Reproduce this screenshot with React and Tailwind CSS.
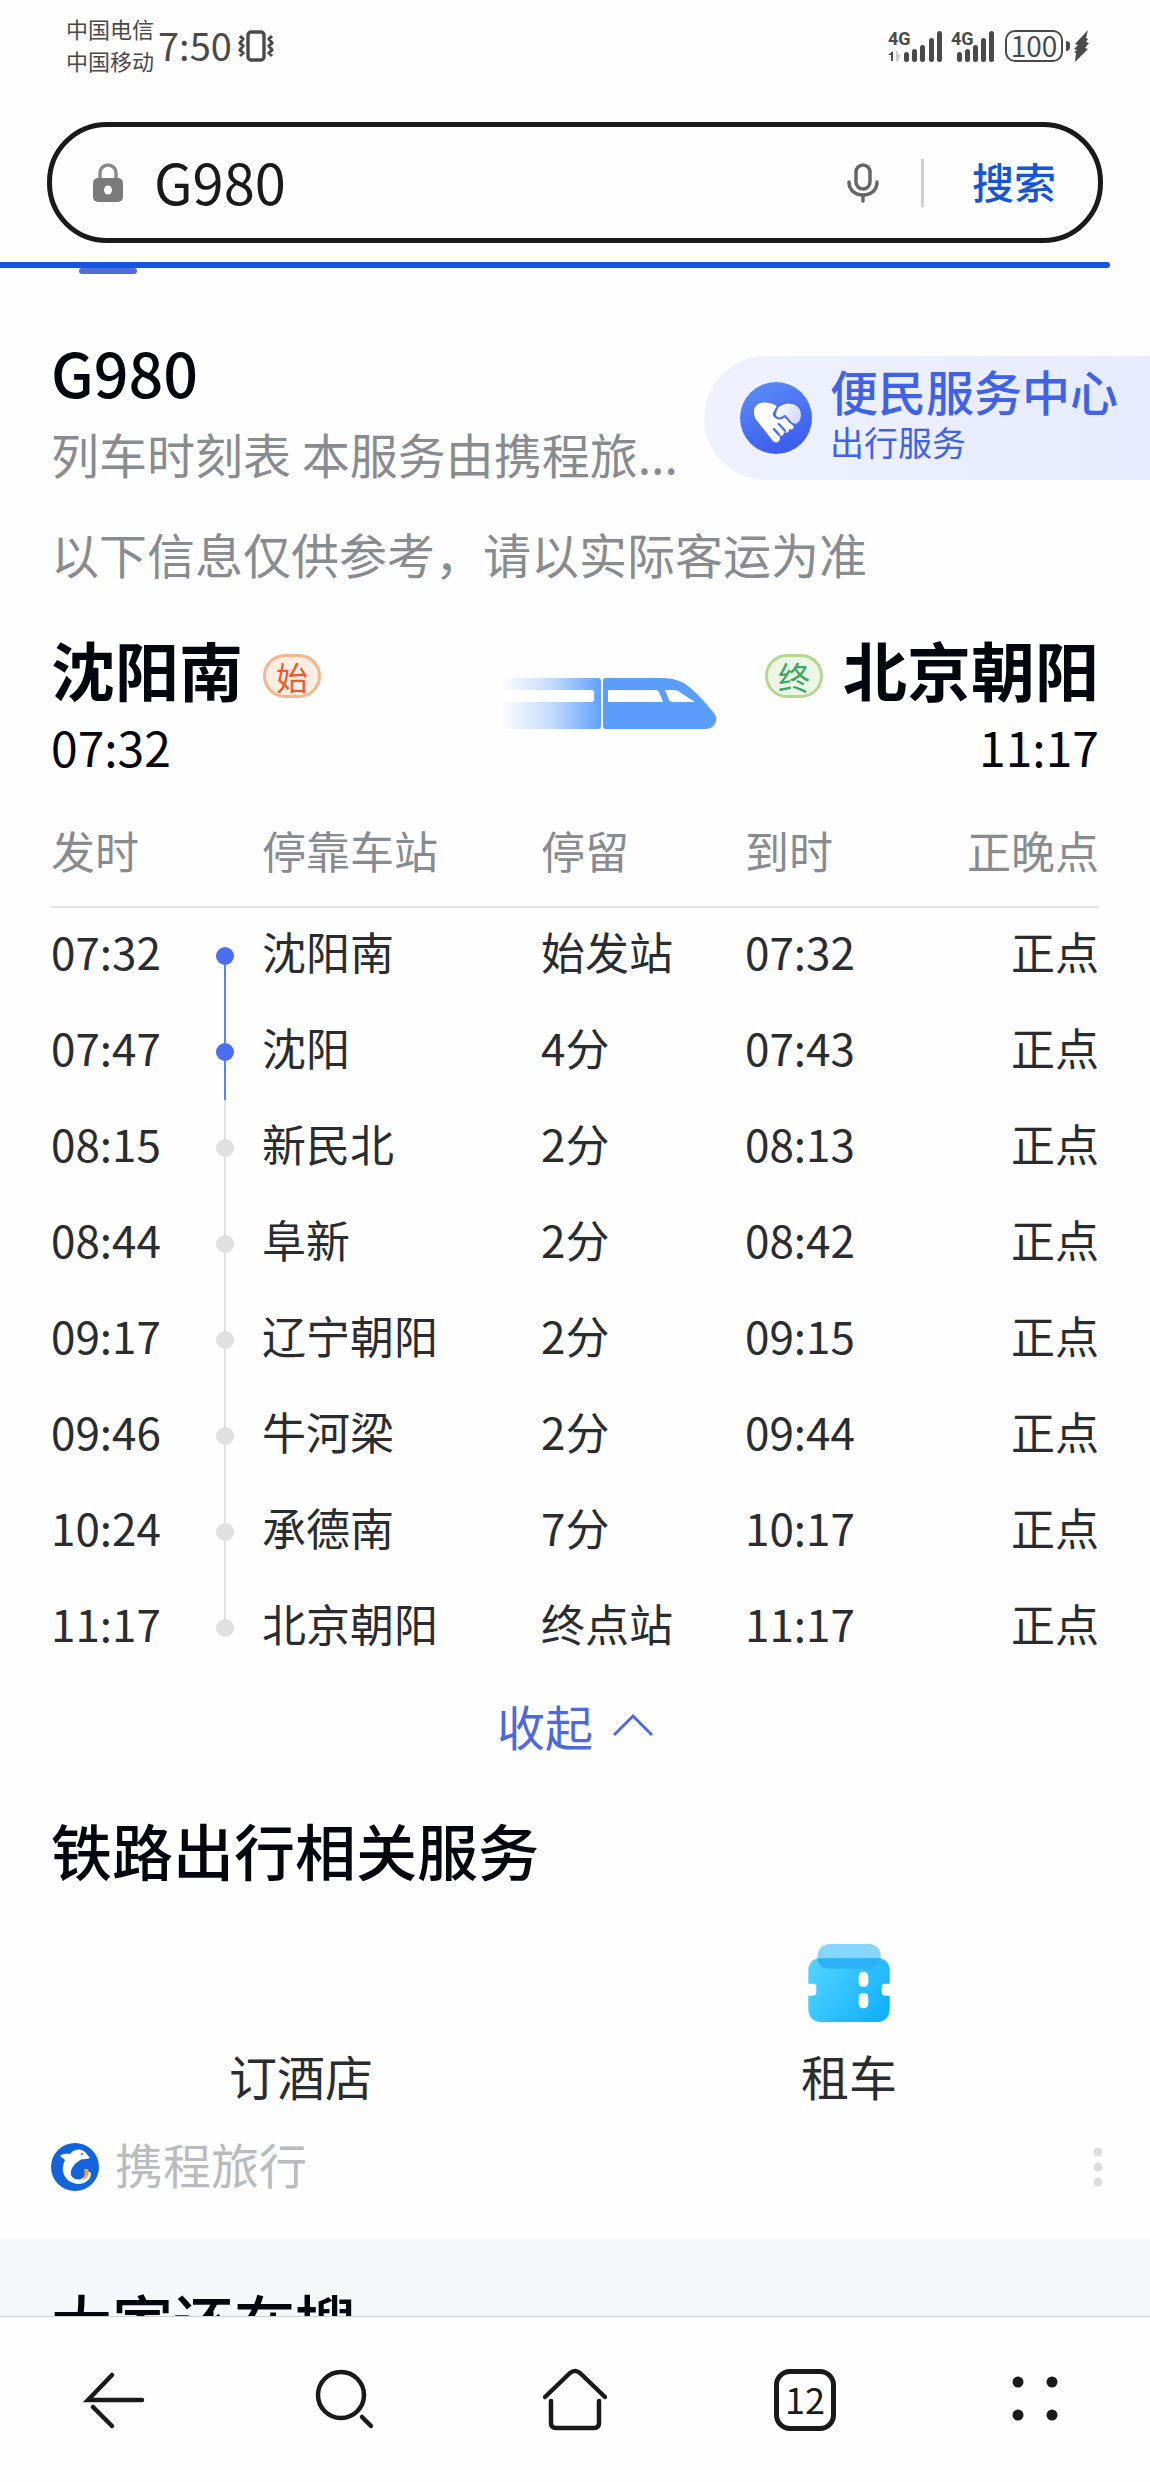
import React from 'react';

const stops = [
  { depart: '07:32', station: '沈阳南', stay: '始发站', arrive: '07:32', status: '正点', passed: true },
  { depart: '07:47', station: '沈阳', stay: '4分', arrive: '07:43', status: '正点', passed: true },
  { depart: '08:15', station: '新民北', stay: '2分', arrive: '08:13', status: '正点', passed: false },
  { depart: '08:44', station: '阜新', stay: '2分', arrive: '08:42', status: '正点', passed: false },
  { depart: '09:17', station: '辽宁朝阳', stay: '2分', arrive: '09:15', status: '正点', passed: false },
  { depart: '09:46', station: '牛河梁', stay: '2分', arrive: '09:44', status: '正点', passed: false },
  { depart: '10:24', station: '承德南', stay: '7分', arrive: '10:17', status: '正点', passed: false },
  { depart: '11:17', station: '北京朝阳', stay: '终点站', arrive: '11:17', status: '正点', passed: false },
];

function VibrateIcon() {
  return (
    <svg className="w-9 h-8" viewBox="0 0 36 32" fill="none" stroke="#4a4a4a">
      <rect x="10" y="2" width="16" height="28" rx="3" strokeWidth="3.4" />
      <path d="M2 6l3 3-3 4 3 3-3 4 3 3-3 3M34 6l-3 3 3 4-3 3 3 4-3 3 3 3" strokeWidth="3" />
    </svg>
  );
}

function SignalOne() {
  return (
    <svg className="w-[55px] h-8 overflow-visible" viewBox="0 0 55 32" fill="#4a4a4a">
      <text x="0" y="15" fontSize="18" fontWeight="700" fontFamily="Roboto, sans-serif">4G</text>
      <path d="M5 21v10H3v-6H0z" />
      <path d="M8 21h2v4l3-1-3 7H8z" fill="#c9c9c9" />
      <rect x="16" y="22" width="5" height="10" rx="2.5" />
      <rect x="24" y="19" width="5" height="13" rx="2.5" />
      <rect x="32" y="15" width="5" height="17" rx="2.5" />
      <rect x="41" y="8" width="5" height="24" rx="2.5" />
      <rect x="49" y="1" width="5" height="31" rx="2.5" />
    </svg>
  );
}

function SignalTwo() {
  return (
    <svg className="w-11 h-8 overflow-visible" viewBox="0 0 44 32" fill="#4a4a4a">
      <text x="0" y="15" fontSize="18" fontWeight="700" fontFamily="Roboto, sans-serif">4G</text>
      <rect x="6" y="22" width="5" height="10" rx="2.5" />
      <rect x="14" y="19" width="5" height="13" rx="2.5" />
      <rect x="22" y="15" width="5" height="17" rx="2.5" />
      <rect x="30" y="8" width="5" height="24" rx="2.5" />
      <rect x="38" y="1" width="5" height="31" rx="2.5" />
    </svg>
  );
}

function StatusBar() {
  return (
    <div className="flex items-center justify-between h-[92px] pl-[66px] pr-[61px] text-[#4a4a4a]">
      <div className="flex items-center">
        <div className="pb-1 text-[22px] leading-8">
          <div>中国电信</div>
          <div>中国移动</div>
        </div>
        <span className="ml-1 mr-[6px] pb-[2px] text-[38px] leading-10">7:50</span>
        <VibrateIcon />
      </div>
      <div className="flex items-center">
        <SignalOne />
        <span className="w-2" />
        <SignalTwo />
        <span className="flex items-center justify-center ml-[10px] w-[58px] h-8 pb-[2px] rounded-[10px] border-2 border-[#4a4a4a] text-[28px] leading-6">
          100
        </span>
        <span className="ml-[3px] w-1 h-[10px] rounded-r bg-[#4a4a4a]" />
        <svg className="ml-1 w-[15px] h-8" viewBox="0 0 15 32" fill="#4a4a4a">
          <path d="M14 0L1 14l3 1-4 4 3 1-3 2 2 1-1 9L14 19l-3-1 4-5-3-1 2-3-2-1z" />
        </svg>
      </div>
    </div>
  );
}

function SearchBar() {
  return (
    <form
      className="flex items-center mt-[30px] mx-[47px] h-[121px] pl-10 pr-[42px] rounded-[60px] border-[5px] border-[#1a1a1a]"
      onSubmit={(e) => e.preventDefault()}
    >
      <svg className="w-8 h-10 shrink-0" viewBox="0 0 32 40">
        <path d="M8 17V10a8 8 0 0 1 16 0v7" fill="none" stroke="#8a8a8a" strokeWidth="3.5" />
        <rect x="1" y="15" width="30" height="24" rx="5" fill="#7a7a7a" />
        <ellipse cx="16" cy="27" rx="4" ry="4.5" fill="#fff" />
      </svg>
      <input
        aria-label="搜索内容"
        defaultValue="G980"
        className="ml-[30px] flex-1 min-w-0 h-20 pb-1 text-[56px] text-[#1a1a1a] outline-none"
      />
      <button type="button" aria-label="语音搜索" className="shrink-0">
        <svg className="w-8 h-10" viewBox="0 0 32 40" fill="none" stroke="#666" strokeWidth="3.5" strokeLinecap="round">
          <rect x="9" y="2" width="14" height="24" rx="7" />
          <path d="M2 19c0 8 6 13 14 13s14-5 14-13M16 32v6" />
        </svg>
      </button>
      <span className="ml-[42px] w-[3px] h-12 bg-[#d0d0d0]" />
      <button type="submit" className="ml-12 pb-1 text-[42px] leading-[56px] font-medium text-[#1456d8]">
        搜索
      </button>
    </form>
  );
}

function HandshakeIcon() {
  return (
    <svg className="w-[72px] h-[72px] shrink-0" viewBox="0 0 214 214">
      <defs>
        <linearGradient id="hands-bg" x1="0.2" y1="0" x2="0.6" y2="1">
          <stop offset="0" stopColor="#5c8cf5" />
          <stop offset="1" stopColor="#3a5cf0" />
        </linearGradient>
        <linearGradient id="hands-right" x1="0" y1="0" x2="1" y2="0.4">
          <stop offset="0" stopColor="#fff" />
          <stop offset="1" stopColor="#d3ddfc" />
        </linearGradient>
      </defs>
      <circle cx="107" cy="107" r="107" fill="url(#hands-bg)" />
      <path
        d="M48 112C32 84 46 61 72 61c16 0 28 4 38 12l-6 10c-10 8-8 22 4 24 8 2 16-1 22-7l28 30c4 8-4 14-12 9 2 10-8 16-16 9 2 10-8 16-14 8 2 8 4 14 0 19-6 6-12 6-18 0z"
        fill="#fff"
      />
      <path
        d="M112 74c16-16 44-18 60-4 16 14 16 42 0 54-6 4-16 2-22-4l-17-19c-10 10-26 10-29-2-1-10 4-20 8-25z"
        fill="url(#hands-right)"
        stroke="#4a6ff2"
        strokeWidth="6"
        strokeLinejoin="round"
      />
      <path d="M101 140l15 17M115 125l19 20" stroke="#4a6ff2" strokeWidth="7" strokeLinecap="round" />
    </svg>
  );
}

function TrainIcon() {
  return (
    <svg className="mt-[46px] w-[217px] h-[51px] shrink-0" viewBox="0 0 217 51">
      <defs>
        <linearGradient id="tail" x1="0" y1="0" x2="1" y2="0">
          <stop offset="0" stopColor="#5a9dfb" stopOpacity="0" />
          <stop offset="0.5" stopColor="#5a9dfb" stopOpacity="0.35" />
          <stop offset="1" stopColor="#5a9dfb" stopOpacity="0.95" />
        </linearGradient>
      </defs>
      <path d="M0 0h98q3 0 3 3v45q0 3-3 3H0z" fill="url(#tail)" />
      <path d="M0 12h92q2 0 2 2v8q0 2-2 2H0z" fill="#fff" />
      <path d="M106 0h55c18 0 26 6 36 16 8 8 12 13 17 19 6 8-1 16-8 16H106q-3 0-3-3V3q0-3 3-3z" fill="#5a9dfb" />
      <path d="M108 12h48q2 0 3 2l4 10h-55z" fill="#fff" />
      <path d="M165 12h9q4 0 7 3l14 9h-22q-3 0-4-2z" fill="#fff" />
    </svg>
  );
}

function CtripLogo() {
  return (
    <svg className="w-12 h-12" viewBox="0 0 48 48">
      <circle cx="24" cy="24" r="24" fill="#1263dc" />
      <path
        d="M9 13c4-3 8-2 10-2 5-6 12-5 15-2l5 6c-4 2-8 0-11 3-5 3-9 8-8 14 3 6 11 6 14 0l1-5 5 3c0 9-10 13-18 10C13 37 9 27 14 17z"
        fill="#fff"
      />
      <path d="M33 26h4c2 5 0 9-6 11 3-3 3-7 2-11z" fill="#f5a040" />
      <circle cx="31" cy="11" r="1" fill="#1263dc" />
    </svg>
  );
}

function TicketIcon() {
  return (
    <svg className="w-[82px] h-[78px]" viewBox="0 0 244 234">
      <defs>
        <linearGradient id="ticket" x1="0" y1="0.2" x2="1" y2="0.8">
          <stop offset="0" stopColor="#50d2ff" />
          <stop offset="1" stopColor="#10b0ff" />
        </linearGradient>
      </defs>
      <path d="M64 0h118c20 0 35 15 35 35v12H28V35C28 15 44 0 64 0z" fill="#86d6ff" />
      <path
        d="M34 43h176c20 0 34 16 34 36v40h-14q-10 0-10 10v16q0 10 10 10h14v40c0 24-16 39-36 39H38c-22 0-38-15-38-39v-40h14q10 0 10-10v-16q0-10-10-10H0V79c0-20 14-36 34-36z"
        fill="url(#ticket)"
      />
      <path d="M28 43h189c0 18-14 31-32 31H60c-18 0-32-13-32-31z" fill="#2cb2f8" />
      <rect x="151" y="83" width="29" height="46" rx="14" fill="#fff" />
      <rect x="151" y="147" width="29" height="46" rx="14" fill="#fff" />
    </svg>
  );
}

function Timetable() {
  return (
    <table className="mt-10 w-full table-fixed text-left text-[44px] text-[#2a2c30]">
      <thead>
        <tr className="border-b-2 border-[#e3e3e5] text-[#888b90]">
          <th className="w-[165px] pb-6 font-normal leading-[64px]">发时</th>
          <th className="w-[46px]" aria-label="进度" />
          <th className="w-[279px] pb-6 font-normal leading-[64px]">停靠车站</th>
          <th className="w-[204px] pb-6 font-normal leading-[64px]">停留</th>
          <th className="w-[170px] pb-6 font-normal leading-[64px]">到时</th>
          <th className="pb-6 font-normal leading-[64px] text-right">正晚点</th>
        </tr>
      </thead>
      <tbody>
        {stops.map((stop, i) => (
          <tr key={stop.station} className="h-24 leading-[64px]">
            <td className="pb-[10px]">{stop.depart}</td>
            <td className="h-24">
              <div className="flex flex-col items-center w-[18px] h-24">
                <span className={`w-[2px] flex-1 ${i === 0 ? 'bg-transparent' : stop.passed ? 'bg-[#5b82f0]' : 'bg-[#e2e2e2]'}`} />
                <span className={`w-[18px] h-[18px] rounded-full ${stop.passed ? 'bg-[#4a6ef5]' : 'bg-[#e0e0e0]'}`} />
                <span
                  className={`w-[2px] flex-1 ${
                    i === stops.length - 1 ? 'bg-transparent' : stop.passed ? 'bg-[#5b82f0]' : 'bg-[#e2e2e2]'
                  }`}
                />
              </div>
            </td>
            <td className="pb-[10px]">{stop.station}</td>
            <td className="pb-[10px]">{stop.stay}</td>
            <td className="pb-[10px]">{stop.arrive}</td>
            <td className="pb-[10px] text-right">{stop.status}</td>
          </tr>
        ))}
      </tbody>
    </table>
  );
}

function BottomNav() {
  return (
    <nav className="shrink-0 flex items-center h-[166px] border-t border-[#cdd0d3] bg-[#fefefe]">
      <button aria-label="返回" className="flex-1 flex justify-center">
        <svg className="w-16 h-16" viewBox="0 0 64 64" fill="none" stroke="#1a1a1a" strokeWidth="4.5" strokeLinecap="round">
          <path d="M59 32H5L29 7M10 39l19 19" />
        </svg>
      </button>
      <button aria-label="搜索" className="flex-1 flex justify-center">
        <svg className="w-16 h-16" viewBox="0 0 64 64" fill="none" stroke="#1a1a1a" strokeWidth="4.5" strokeLinecap="round">
          <circle cx="28" cy="27" r="23" />
          <path d="M49 49l9 9" />
        </svg>
      </button>
      <button aria-label="主页" className="flex-1 flex justify-center">
        <svg
          className="w-16 h-16"
          viewBox="0 0 64 64"
          fill="none"
          stroke="#1a1a1a"
          strokeWidth="4.5"
          strokeLinecap="round"
          strokeLinejoin="round"
        >
          <path d="M2 29L27 5q5-4 10 0l25 24" />
          <path d="M8 33v22q0 5 5 5h38q5 0 5-5V33" />
        </svg>
      </button>
      <button aria-label="标签页" className="flex-1 flex justify-center">
        <span className="flex items-center justify-center w-[62px] h-[62px] pb-1 rounded-[16px] border-[5px] border-[#1a1a1a] text-[36px] leading-10 text-[#1a1a1a]">
          12
        </span>
      </button>
      <button aria-label="菜单" className="flex-1 flex justify-center">
        <svg className="w-16 h-16" viewBox="0 0 64 64" fill="#1a1a1a">
          <circle cx="15" cy="14" r="5.5" />
          <circle cx="49" cy="14" r="5.5" />
          <circle cx="15" cy="47" r="5.5" />
          <circle cx="49" cy="47" r="5.5" />
        </svg>
      </button>
    </nav>
  );
}

export default function App() {
  return (
    <div
      lang="zh-CN"
      className="flex flex-col h-screen overflow-hidden bg-[#fefefe] font-['Noto_Sans_CJK_SC','Noto_Sans',sans-serif]"
    >
      <header className="shrink-0">
        <StatusBar />
        <SearchBar />
        {/* Page load progress */}
        <div className="mt-[19px] mr-10 h-[6px] rounded-r-full bg-[#1456e0]" />
      </header>

      <main className="flex-1 min-h-0 overflow-hidden">
        {/* Active tab marker */}
        <div className="ml-[79px] w-[58px] h-[6px] rounded-full bg-[#506cd8]" />

        {/* Title and service badge */}
        <div className="flex items-start justify-between mt-[62px] pl-[51px]">
          <div className="whitespace-nowrap">
            <h1 className="text-[61px] leading-[72px] font-medium text-[#05060f]">G980</h1>
            <p className="mt-[13px] text-[48px] leading-[64px] text-[#888b90]">列车时刻表 本服务由携程旅...</p>
          </div>
          <a
            href="#service"
            className="flex items-center mt-5 w-[446px] h-[124px] pl-9 rounded-l-full bg-linear-to-r from-[#eff2fd] to-[#e6ebff] text-[#3f62e6]"
          >
            <HandshakeIcon />
            <span className="ml-[18px] pb-2 whitespace-nowrap">
              <span className="block text-[48px] leading-[56px] font-medium">便民服务中心</span>
              <span className="block text-[34px] leading-[48px]">出行服务</span>
            </span>
          </a>
        </div>

        <div className="px-[51px]">
          <p className="mt-9 text-[48px] leading-[64px] text-[#888b90]">以下信息仅供参考，请以实际客运为准</p>

          {/* Route */}
          <section className="flex items-start mt-[47px] text-[#05060f]">
            <div>
              <div className="flex items-center">
                <h2 className="text-[64px] leading-[72px] font-bold">沈阳南</h2>
                <span className="flex items-center justify-center mt-4 ml-5 w-[58px] h-11 rounded-full border-[3px] border-[#f5b68c] bg-[#fdeee4] text-[32px] leading-8 text-[#ee5a2c]">
                  始
                </span>
              </div>
              <p className="mt-[10px] text-[48px] leading-[64px]">07:32</p>
            </div>
            <span className="flex-1" />
            <TrainIcon />
            <div className="ml-12">
              <div className="flex items-center">
                <span className="flex items-center justify-center mt-4 mr-5 w-[58px] h-11 rounded-full border-[3px] border-[#b2d890] bg-[#edf6e4] text-[32px] leading-8 text-[#38a868]">
                  终
                </span>
                <h2 className="text-[64px] leading-[72px] font-bold">北京朝阳</h2>
              </div>
              <p className="mt-[10px] text-right text-[48px] leading-[64px]">11:17</p>
            </div>
          </section>

          <Timetable />

          <button className="flex items-center mx-auto mt-[17px] text-[48px] leading-[64px] text-[#4c69de]">
            收起
            <svg className="ml-5 w-10 h-6" viewBox="0 0 40 24" fill="none" stroke="#4c69de" strokeWidth="3">
              <path d="M1 22L20 3l19 19" />
            </svg>
          </button>

          <h2 className="mt-[53px] text-[61px] leading-[80px] font-medium text-[#05060f]">铁路出行相关服务</h2>
          <div className="grid grid-cols-2 gap-12 mt-[54px] text-[48px] leading-[64px] text-[#2a2c30]">
            <a href="#hotel" className="flex flex-col items-center">
              <span className="h-[78px]" />
              <span className="mt-[21px]">订酒店</span>
            </a>
            <a href="#car" className="flex flex-col items-center">
              <TicketIcon />
              <span className="mt-[21px]">租车</span>
            </a>
          </div>

          {/* Source */}
          <div className="flex items-center mt-6 text-[48px] leading-[64px] text-[#b9bbbf]">
            <CtripLogo />
            <span className="ml-4 pb-2">携程旅行</span>
            <button aria-label="更多" className="ml-auto -mr-1">
              <svg className="w-[10px] h-10" viewBox="0 0 10 40" fill="#dcdcdc">
                <circle cx="5" cy="5" r="4.5" />
                <circle cx="5" cy="20" r="4.5" />
                <circle cx="5" cy="35" r="4.5" />
              </svg>
            </button>
          </div>
        </div>

        <section className="mt-9 h-40 px-[51px] pt-[42px] bg-[#f5f7fb]">
          <h2 className="text-[61px] leading-[80px] font-medium text-[#05060f]">大家还在搜</h2>
        </section>
      </main>

      <BottomNav />
    </div>
  );
}
